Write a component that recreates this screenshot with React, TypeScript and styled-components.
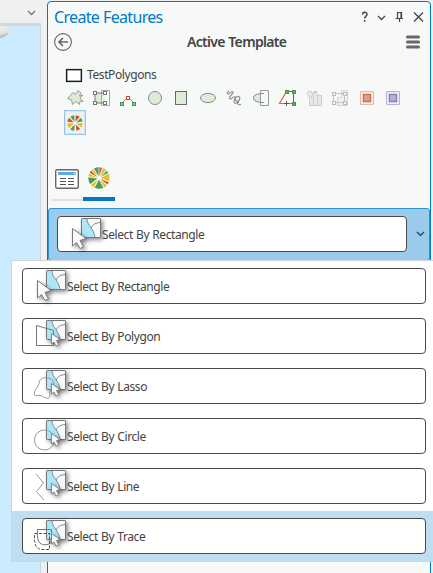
import React from 'react';
import styled, { createGlobalStyle } from 'styled-components';

const GlobalStyle = createGlobalStyle`
  * { box-sizing: border-box; }
  body { margin: 0; overflow: hidden; font-family: 'Noto Sans', 'Open Sans', sans-serif; color: #444; }
  svg { display: block; flex: none; overflow: visible; }
`;

const Page = styled.div`
  position: relative;
  display: flex;
  width: 433px;
  height: 573px;
  overflow: hidden;
  background: #eff0f2;
`;

const MapColumn = styled.div`
  display: flex;
  flex-direction: column;
  width: 41px;
  margin-right: 6px;
`;

const MapTabs = styled.div`
  display: flex;
  justify-content: flex-end;
  height: 26px;
  padding: 10px 5px 0 0;
  border-bottom: 3px solid #d5d6da;
`;

const MapView = styled.div`
  flex: 1;
  background: #cbebff;
  border-right: 1px solid #cfd1d5;
`;

const Panel = styled.section`
  display: flex;
  flex-direction: column;
  width: 384px;
  height: 580px;
  margin-top: 1px;
  border: 1px solid #0079c1;
  border-radius: 4px 4px 0 0;
  background: #f7f9f8;
`;

const TitleBar = styled.header`
  display: flex;
  align-items: center;
  justify-content: space-between;
  height: 30px;
  padding: 0 5px 0 6px;
`;

const Text = styled.span<{ $size: number; $width: number; $weight?: number; $color?: string }>`
  display: block;
  width: ${p => p.$width}px;
  font-size: ${p => p.$size}px;
  font-weight: ${p => p.$weight ?? 400};
  color: ${p => p.$color ?? '#444'};
  line-height: 20px;
  white-space: nowrap;
`;

const Title = styled(Text)`
  letter-spacing: -0.68px;
  word-spacing: 0.5px;
  padding-bottom: 1px;
`;

const Heading = styled(Text)`
  letter-spacing: -0.68px;
  word-spacing: 0.5px;
`;

const Label = styled(Text)`
  letter-spacing: -0.4px;
  word-spacing: 0.4px;
`;

const SubHeader = styled.div`
  display: flex;
  align-items: center;
  justify-content: space-between;
  height: 20px;
  padding: 0 10px 0 6px;
`;

const TemplateRow = styled.div`
  display: flex;
  align-items: center;
  gap: 5px;
  height: 20px;
  margin-top: 13px;
  padding-left: 18px;
`;

const Swatch = styled.div`
  width: 16px;
  height: 13px;
  border: 1px solid #1c1c1c;
  box-shadow: inset 0 0 0 0.5px #555, 0 0 1px #666;
  background: #fff;
`;

const Tools = styled.div`
  display: flex;
  gap: 8.5px;
  height: 18px;
  margin: 4px 0 3px 18px;
`;

const ActiveTool = styled.div`
  display: flex;
  align-items: center;
  justify-content: center;
  width: 22px;
  height: 25px;
  margin-left: 16px;
  border: 1px solid #9ac6e4;
  outline: 1px solid #d3e6f3;
  outline-offset: -2px;
  background: #eef0f2;
`;

const TabStrip = styled.div`
  display: flex;
  height: 35px;
  margin: 31px 0 7px 3px;
`;

const Tab = styled.div<{ $active?: boolean }>`
  display: flex;
  justify-content: center;
  align-items: flex-start;
  width: 32px;
  padding-top: ${p => (p.$active ? 1 : 0)}px;
  background: linear-gradient(${p => (p.$active ? '#0079c1' : '#dfe0e0')} 0 0) 0 ${p => (p.$active ? 31 : 33)}px / 100% ${p => (p.$active ? 4 : 2)}px no-repeat;
`;

const Combo = styled.div`
  display: flex;
  align-items: center;
  gap: 9px;
  height: 53px;
  padding: 0 3px 1px 8px;
  border: 1px solid #2f93d1;
  border-radius: 3px;
  background: #9acbeb;
`;

const ToolButton = styled.div<{ $width: number }>`
  display: flex;
  width: ${p => p.$width}px;
  height: 36px;
  border: 1px solid #4a4a4a;
  border-radius: 4px;
  background: #fff;
  ${Label} { padding-top: 8px; }
`;

const Menu = styled.div`
  position: absolute;
  left: 11px;
  top: 260px;
  width: 430px;
  border: 1px solid #d0d3d8;
  background: #fff;
`;

const MenuItem = styled.div<{ $hover: boolean }>`
  padding: 7px 0 7px 10px;
  background: ${p => (p.$hover ? '#bfdff0' : '#fff')};
`;

const WHEEL: [number, number, string][] = [
  [-28, -2, '#4f9a5d'], [2, 17, '#cf5438'], [22, 42, '#dec330'], [47, 60, '#4f9a5d'],
  [65, 108, '#dec330'], [114, 128, '#cf5438'], [133, 151, '#dec330'], [156, 204, '#4f9a5d'],
  [209, 229, '#dec330'], [235, 274, '#4f9a5d'], [280, 294, '#dec330'], [299, 312, '#cf5438'], [316, 328, '#dec330'],
];

const SMALL_WHEEL: [number, number, string][] = [
  [-38, -5, '#4f9a5d'], [5, 38, '#cf5438'], [48, 78, '#4f9a5d'], [88, 125, '#dec330'],
  [138, 170, '#cf5438'], [184, 218, '#4f9a5d'], [228, 268, '#dec330'], [280, 312, '#cf5438'],
];

function Wheel({ size, wedges }: { size: number; wedges: [number, number, string][] }) {
  const pt = (deg: number, r: number) => {
    const a = (deg * Math.PI) / 180;
    return `${(12 + r * Math.sin(a)).toFixed(2)} ${(12 - r * Math.cos(a)).toFixed(2)}`;
  };
  return (
    <svg width={size} height={size} viewBox="0 0 24 24">
      <circle cx="12" cy="12" r="12" fill="#fbf8ee" />
      {wedges.map(([a, b, c]) => (
        <path key={a} fill={c} d={`M${pt((a + b) / 2, 2)} L${pt(a, 11.7)} A11.7 11.7 0 0 1 ${pt(b, 11.7)} Z`} />
      ))}
    </svg>
  );
}

const Handle = ({ x, y, c = '#777', f = '#f7f9f8' }: { x: number; y: number; c?: string; f?: string }) => (
  <rect x={x - 1} y={y - 1} width="3" height="3" fill={f} stroke={c} transform="translate(-.5 -.5)" />
);

const GREEN = '#dcecd9';

const toolDrawings: React.ReactNode[] = [
  <path d="M1.5 9.5 L7 3.5 L9.5 5.5 L12 1.5 L15 4 L13.5 7 L17 6 L14 9 L17 12.5 L14 12 L13.5 15.5 L10 12.5 L6.5 15.5 L5.5 11 Z" fill={GREEN} stroke="#999" />,
  <><path d="M2 4 H12 V14 H2 Z" fill={GREEN} /><path d="M8.5 1.5 H16.5 V16.5 H8.5 Z" stroke="#aaa" fill="#f7f9f8" fillOpacity=".5" /><path d="M12 4 H2 V14 H12" stroke="#777" fill="none" /><Handle x={2} y={4} /><Handle x={2} y={14} /><Handle x={12} y={4} /><Handle x={12} y={14} /></>,
  <><path d="M3 14 L9 8 L15 14" fill="none" stroke="#888" /><Handle x={9} y={9} c="#d9492b" /><Handle x={3} y={15} c="#47934c" f="#8fc08f" /><Handle x={15} y={15} c="#47934c" f="#8fc08f" /></>,
  <circle cx="9" cy="9" r="6.5" fill={GREEN} stroke="#888" />,
  <rect x="3.5" y="2.5" width="11" height="13" fill={GREEN} stroke="#6a6a6a" />,
  <ellipse cx="9" cy="9" rx="7.5" ry="4.6" fill={GREEN} stroke="#888" />,
  <path d="M4.5 2 C2 2.5 1.5 5 3.5 5 C5 5 6.5 1.5 8 3 C9 4.5 3.5 7.5 4.5 9.5 C6 11.5 8.5 6.5 10 8 C11 9.5 7.5 13 9.5 14 C12 15 16 10 14.5 8 C12.5 6 9.5 9 10.5 11 C11.5 13 15 11.5 13 13.5 C12 15.5 14.5 16 16 15.5" fill="none" stroke="#888" strokeWidth="1.1" />,
  <><path d="M12 4.5 C5 4.5 1.5 6 1.5 9 C1.5 12 5 13.5 12 13.5" fill={GREEN} stroke="#888" /><path d="M8.5 1.5 H16.5 V16.5 H8.5 Z" fill="#f7f9f8" stroke="#999" /><path d="M8.5 4.5 H12 M8.5 13.5 H12" stroke="#888" /></>,
  <><path d="M8.5 2.5 L1.5 14.5 H15.5" fill="none" stroke="#d56b4d" strokeWidth="1.2" /><path d="M8.5 2.5 H15.5 V14.5" fill="none" stroke="#666" /><Handle x={9} y={3} c="#47934c" f="#69a969" /><Handle x={16} y={3} c="#47934c" f="#69a969" /><Handle x={16} y={15} c="#47934c" f="#69a969" /><path d="M6 12 H11 V17 H6 Z" fill="#f7f9f8" /><path d="M8.5 12 V17 M6 14.5 H11" stroke="#555" /></>,
  <><path d="M4.5 16.5 V8.5 H8 V3.5 H12 V6.5 H16.5 V16.5 Z" fill="#e8e9e9" stroke="#cacccc" /><path d="M8.5 8 V16 M12.5 6 V16 M9 2.5 H12" stroke="#cacccc" /><circle cx="5" cy="5" r="2.5" fill="#eee" stroke="#d0d1d1" strokeDasharray="1.4 1" strokeWidth="2" /></>,
  <><path d="M10.5 1.5 H16.5 V16.5 H6.5 V8.5 H10.5 Z" fill="#f1f2f2" stroke="#d3d4d4" /><path d="M2.5 4.5 H13.5 V13.5 H2.5 Z" fill="none" stroke="#c2c3c3" /><Handle x={3} y={5} c="#bbb" /><Handle x={14} y={5} c="#bbb" /><Handle x={3} y={14} c="#bbb" /><Handle x={14} y={14} c="#bbb" /></>,
  <><rect x="2.5" y="2.5" width="13" height="13" rx=".5" fill="#fae9e3" stroke="#eab7a7" /><rect x="5.5" y="5.5" width="7" height="7" fill="#dda08b" stroke="#cc7153" strokeWidth="1.4" /></>,
  <><rect x="2.5" y="2.5" width="13" height="13" rx=".5" fill="#eeeaf7" stroke="#bbb0dc" /><rect x="5.5" y="5.5" width="7" height="7" fill="#b9b0d5" stroke="#8a7eb5" strokeWidth="1.4" /></>,
];

type Shape = 'rectangle' | 'polygon' | 'lasso' | 'circle' | 'line' | 'trace';

const sketches: Record<Shape, React.ReactNode> = {
  rectangle: null,
  polygon: <path d="M14.5 7.5 L31.5 12.5 V27.5 H14.5 Z" stroke="#777" />,
  lasso: <path d="M17.5 13 C20 8 28 9 31 13 C34 17 26 22 28 28 C28 31 24 31 20 28 C17 26 14 29 12.5 27 C11 23 17 19 17.5 13 Z" stroke="#999" />,
  circle: <circle cx="22.5" cy="22" r="10" stroke="#999" />,
  line: <path d="M14 6 L21.5 15 L14.5 23.5 L22 32" stroke="#999" />,
  trace: (
    <>
      <path d="M15.5 11.5 H29.5 V23 C29.5 27 19 29 16.5 23 C15 20 15.5 14 15.5 11.5 Z" stroke="#777" />
      <path d="M12.5 15.5 H27.5 V31.5 H20 C14 31 12 27 12.5 15.5 Z" stroke="#555" strokeDasharray="3 1.5" />
    </>
  ),
};

const Raised = styled.g`
  filter: drop-shadow(2px 2px 2px rgba(0, 0, 0, 0.45));
`;

function SelectIcon({ shape }: { shape: Shape }) {
  const big = shape === 'rectangle';
  return (
    <svg width="44" height="34" viewBox="1 1 44 34" fill="none">
      <Raised>
        <rect x="24.5" y="2.5" width="19" height="19" rx="1" fill="#f7f9fa" stroke="#777" />
        <path d="M25 3 H30 C30.5 9 36 12 38 21 H25 Z" fill="#aee6f7" />
        <path d="M30 3 C30.5 10 36.5 12 38 21 M34 12 C36 8 39 7 43 6.5" stroke="#7c8c91" />
        <rect x="24.5" y="2.5" width="19" height="19" rx="1" stroke="#777" />
      </Raised>
      {sketches[shape]}
      <Raised>
        {big ? (
          <path d="M15.5 12.5 V30 L19.5 26.5 L23 32.5 L26.5 31 L23 24.5 L29 22.5 Z" fill="#fafafa" stroke="#777" />
        ) : (
          <path d="M29.5 15.5 V26 L32 24 L34 28 L36.5 26.5 L34.5 22.5 L38 21.5 Z" fill="#fafafa" stroke="#888" />
        )}
      </Raised>
    </svg>
  );
}

function SelectTool({ shape, label, width }: { shape: Shape; label: string; width: number }) {
  return (
    <ToolButton $width={width}>
      <SelectIcon shape={shape} />
      <Label $size={12} $width={120}>{label}</Label>
    </ToolButton>
  );
}

const items: [Shape, string][] = [
  ['rectangle', 'Select By Rectangle'],
  ['polygon', 'Select By Polygon'],
  ['lasso', 'Select By Lasso'],
  ['circle', 'Select By Circle'],
  ['line', 'Select By Line'],
  ['trace', 'Select By Trace'],
];

export default function App() {
  return (
    <Page>
      <GlobalStyle />
      <MapColumn>
        <MapTabs>
          <svg width="9" height="6" fill="none" stroke="#777" strokeWidth="1.3"><path d="M1 1 L4.5 4.5 L8 1" /></svg>
        </MapTabs>
        <MapView>
          <svg width="10" height="14">
            <defs><linearGradient id="cap" x1=".3" y1="0" x2=".5" y2="1"><stop offset="0" stopColor="#f1f0ea" /><stop offset=".6" stopColor="#e2e1da" /><stop offset="1" stopColor="#a09f94" /></linearGradient></defs>
            <path d="M0 0 H6 C9 3 9 7 7 9 C4 11 2 12 0 12 Z" fill="url(#cap)" />
          </svg>
        </MapView>
      </MapColumn>

      <Panel>
        <TitleBar>
          <Title $size={16} $width={120} $color="#0079c1">Create Features</Title>
          <svg width="64" height="16" fill="none" stroke="#444" strokeWidth="1.3">
            <path d="M1.5 5.5 C1.5 2.4 6 2.6 6 5.2 C6 7.2 3.7 7.4 3.7 9.5 M3.7 11 V12.7" strokeWidth="1.5" />
            <path d="M17 7 L20.5 10.5 L24 7" />
            <path d="M36.5 9.5 V3.5 H40.5 V9.5 M34.5 9.5 H42 M38.5 9.5 V13 M40 3.5 V9.5" strokeWidth="1.2" />
            <path d="M53 3.5 L62 12.5 M62 3.5 L53 12.5" />
          </svg>
        </TitleBar>
        <SubHeader>
          <svg width="18" height="18" fill="none" stroke="#666">
            <circle cx="9" cy="9" r="8.4" strokeWidth="1.1" />
            <path d="M14 9 H5 M9 5 L5 9 L9 13" strokeWidth="1.7" />
          </svg>
          <Heading $size={14} $width={104} $weight={600}>Active Template</Heading>
          <svg width="14" height="13" stroke="#666" strokeWidth="3" strokeLinecap="round"><path d="M1.5 1 H12.5 M1.5 6 H12.5 M1.5 11 H12.5" /></svg>
        </SubHeader>
        <TemplateRow>
          <Swatch />
          <Label $size={12} $width={90}>TestPolygons</Label>
        </TemplateRow>
        <Tools>
          {toolDrawings.map((drawing, i) => <svg key={i} width="18" height="18">{drawing}</svg>)}
        </Tools>
        <ActiveTool><Wheel size={16} wedges={SMALL_WHEEL} /></ActiveTool>
        <TabStrip>
          <Tab>
            <svg width="24" height="24" fill="none">
              <rect x=".7" y="3.7" width="22.6" height="18.6" rx="1.5" fill="#fff" stroke="#666" strokeWidth="1.4" />
              <path d="M3 6 H21 V9 H3 Z" fill="#5aaae5" /><path d="M19 7.5 H20.5" stroke="#fff" />
              <path d="M5 12.5 H11 M13 12.5 H19 M5 15.5 H11 M13 15.5 H19 M5 18.5 H11 M13 18.5 H19" stroke="#555" />
            </svg>
          </Tab>
          <Tab $active><Wheel size={22} wedges={WHEEL} /></Tab>
        </TabStrip>
        <Combo>
          <SelectTool shape="rectangle" label="Select By Rectangle" width={350} />
          <svg width="9" height="6" fill="none" stroke="#264e70" strokeWidth="1.5"><path d="M1 1 L4.5 4.5 L8 1" /></svg>
        </Combo>
      </Panel>

      <Menu>
        {items.map(([shape, label]) => (
          <MenuItem key={shape} $hover={shape === 'trace'}>
            <SelectTool shape={shape} label={label} width={404} />
          </MenuItem>
        ))}
      </Menu>
    </Page>
  );
}
